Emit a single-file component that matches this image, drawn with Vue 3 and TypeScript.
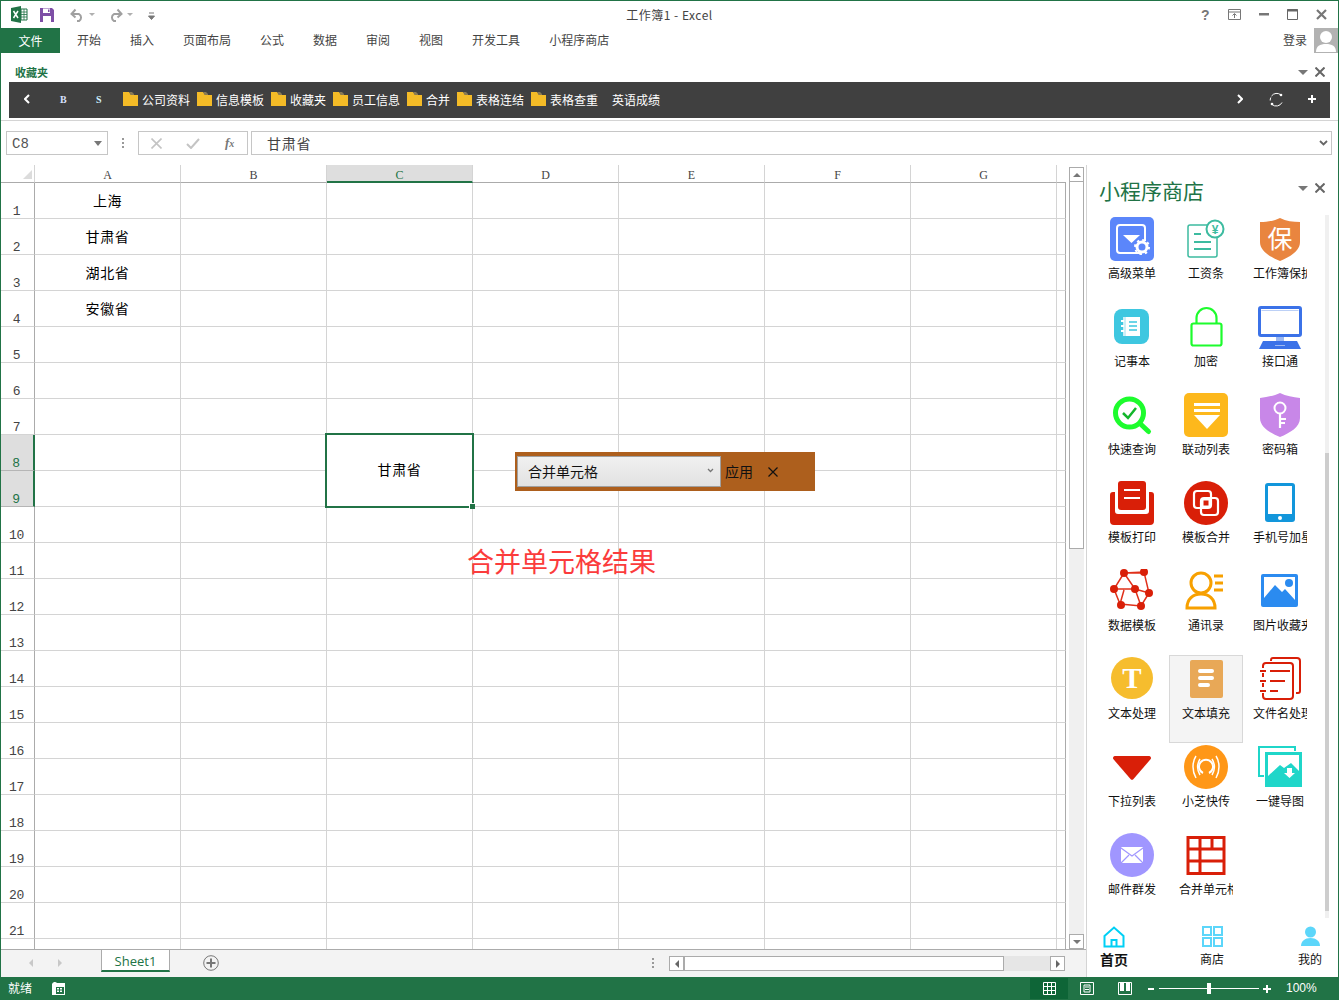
<script setup lang="ts">
import { computed } from 'vue'

const tabs = ['开始', '插入', '页面布局', '公式', '数据', '审阅', '视图', '开发工具', '小程序商店']
const folders = ['公司资料', '信息模板', '收藏夹', '员工信息', '合并', '表格连结', '表格查重']
const colNames = ['A', 'B', 'C', 'D', 'E', 'F', 'G']

const columnA: Record<number, string> = { 1: '上海', 2: '甘肃省', 3: '湖北省', 4: '安徽省' }

type Cell = { key: string; text: string; merged: boolean; edge: boolean }

const rows = computed(() => {
  const list: { num: number; on: boolean; cells: Cell[] }[] = []
  for (let r = 1; r <= 22; r++) {
    const cells: Cell[] = []
    for (let c = 0; c < 8; c++) {
      if (c === 2 && r === 9) continue // covered by the merged C8
      cells.push({
        key: `${r}-${c}`,
        text: c === 0 ? columnA[r] || '' : c === 2 && r === 8 ? '甘肃省' : '',
        merged: c === 2 && r === 8,
        edge: c === 7
      })
    }
    list.push({ num: r, on: r === 8 || r === 9, cells })
  }
  return list
})

const apps = [
  { id: 'menu', label: '高级菜单' },
  { id: 'salary', label: '工资条' },
  { id: 'protect', label: '工作簿保护' },
  { id: 'note', label: '记事本' },
  { id: 'lock', label: '加密' },
  { id: 'monitor', label: '接口通' },
  { id: 'search', label: '快速查询' },
  { id: 'linked', label: '联动列表' },
  { id: 'vault', label: '密码箱' },
  { id: 'print', label: '模板打印' },
  { id: 'mergeT', label: '模板合并' },
  { id: 'phone', label: '手机号加星' },
  { id: 'cube', label: '数据模板' },
  { id: 'contact', label: '通讯录' },
  { id: 'picture', label: '图片收藏夹' },
  { id: 'text', label: '文本处理' },
  { id: 'fill', label: '文本填充' },
  { id: 'files', label: '文件名处理' },
  { id: 'drop', label: '下拉列表' },
  { id: 'send', label: '小芝快传' },
  { id: 'images', label: '一键导图' },
  { id: 'mail', label: '邮件群发' },
  { id: 'mergeC', label: '合并单元格' }
]
</script>

<template>
  <div class="win">
    <!-- title bar -->
    <header class="titlebar">
      <div class="qat">
        <svg class="q-logo" width="17" height="17" viewBox="0 0 17 17">
          <path d="M0 2 10 0v17L0 15z" fill="#217346" />
          <path d="M10 3h6v11h-6z" fill="#fff" stroke="#217346" />
          <path d="M10 6h6M10 8.500h6M10 11h6M13 3v11" stroke="#217346" stroke-width=".8" />
          <path d="M2.500 5 7 12M7 5l-4.500 7" stroke="#fff" stroke-width="1.500" />
        </svg>
        <svg class="q-save" width="16" height="16" viewBox="0 0 16 16">
          <path d="M1 1h12l2 2v12H1z" fill="#7e4fa6" />
          <path d="M4 1.500h7v4.500H4z" fill="#fff" />
          <path d="M4 9h8v6H4z" fill="#fff" />
          <path d="M9 2.500h1.500v2.500H9z" fill="#7e4fa6" />
        </svg>
        <svg class="q-undo" width="15" height="14" viewBox="0 0 15 14" fill="none" stroke="#a0a0a0" stroke-width="2">
          <path d="M2 6h7a4 4 0 0 1 0 7H7" />
          <path d="M5.500 1.500 1.500 6l4 3.500" />
        </svg>
        <span class="q-caret"></span>
        <svg class="q-redo" width="15" height="14" viewBox="0 0 15 14" fill="none" stroke="#a0a0a0" stroke-width="2">
          <path d="M13 6H6a4 4 0 0 0 0 7h2" />
          <path d="M9.500 1.500 13.500 6l-4 3.500" />
        </svg>
        <span class="q-caret"></span>
        <svg class="q-more" width="7" height="8" viewBox="0 0 7 8"><path d="M1 1h5M0.500 4h6L3.500 7.500z" stroke="#777" stroke-width="1" fill="#777" /></svg>
      </div>
      <div class="title-text">工作簿1 - Excel</div>
      <div class="win-btns">
        <span class="help">?</span>
        <svg width="13" height="11" viewBox="0 0 13 11" fill="none" stroke="#777"><path d="M.5.500h12v10H.5zM.5 3h12" /><path d="M6.500 9V5M4.500 6.500l2-2 2 2" /></svg>
        <svg width="10" height="3" viewBox="0 0 10 3"><path d="M0 0h10v2.500H0z" fill="#777" /></svg>
        <svg width="11" height="11" viewBox="0 0 11 11" fill="none" stroke="#666"><path d="M.5.500h10v10H.5z" /><path d="M0 1.500h11" stroke-width="2" /></svg>
        <svg width="11" height="11" viewBox="0 0 11 11" stroke="#777" stroke-width="2.200"><path d="M1 1l9 9M10 1l-9 9" /></svg>
      </div>
    </header>

    <!-- ribbon tabs -->
    <nav class="ribbon">
      <div class="file-tab">文件</div>
      <div class="tabs">
        <span v-for="t in tabs" :key="t">{{ t }}</span>
      </div>
      <div class="login">登录</div>
      <div class="avatar">
        <svg width="24" height="24" viewBox="0 0 24 24">
          <circle cx="12" cy="9" r="6" fill="#fff" />
          <path d="M2 24c0-6 4-8 10-8s10 2 10 8z" fill="#fff" />
        </svg>
      </div>
    </nav>

    <!-- favorites pane -->
    <section class="fav">
      <div class="fav-head">
        <span class="fav-title">收藏夹</span>
        <span class="pane-caret"></span>
        <svg class="pane-x" width="10" height="10" viewBox="0 0 10 10" stroke="#666" stroke-width="2"><path d="M.5.500l9 9M9.500.500l-9 9" /></svg>
      </div>
      <div class="fav-bar">
        <svg class="chev" width="6" height="10" viewBox="0 0 6 10" fill="none" stroke="#fff" stroke-width="2"><path d="M5 1 1 5l4 4" /></svg>
        <span class="fav-b">B</span>
        <span class="fav-s">S</span>
        <div v-for="f in folders" :key="f" class="folder">
          <svg width="15" height="14" viewBox="0 0 15 14">
            <path d="M0 0h6l2 3h7v11H0z" fill="#f4bb27" />
            <path d="M6 0h3l2 2v1H8z" fill="#8a7a55" />
          </svg>
          <span>{{ f }}</span>
        </div>
        <span class="fav-last">英语成绩</span>
        <svg class="chev-r" width="6" height="10" viewBox="0 0 6 10" fill="none" stroke="#fff" stroke-width="2"><path d="M1 1l4 4-4 4" /></svg>
        <svg class="refresh" width="15" height="15" viewBox="0 0 15 15" fill="none" stroke="#fff">
          <path d="M2.500 4A6.500 6.500 0 0 1 12 3M13 10.500A6.500 6.500 0 0 1 3 12.500M1.200 8.500a6.500 6.500 0 0 1 .6-3" />
          <circle cx="12" cy="3" r="1.300" fill="#fff" stroke="none" />
          <circle cx="3" cy="12" r="1.300" fill="#fff" stroke="none" />
        </svg>
        <svg class="plus" width="8" height="8" viewBox="0 0 8 8" stroke="#fff" stroke-width="2"><path d="M4 0v8M0 4h8" /></svg>
      </div>
    </section>

    <!-- formula bar -->
    <section class="formula">
      <div class="namebox">
        <span class="namebox-text">C8</span>
        <i class="namebox-caret"></i>
      </div>
      <div class="fx-dots"><i></i><i></i><i></i></div>
      <div class="fx-btns">
        <svg width="11" height="11" viewBox="0 0 11 11" stroke="#c4c4c4" stroke-width="1.600"><path d="M.5.500l10 10M10.500.500l-10 10" /></svg>
        <svg width="14" height="11" viewBox="0 0 14 11" fill="none" stroke="#c4c4c4" stroke-width="2"><path d="M1 6l4 4 8-9" /></svg>
        <span class="fx">f<small>x</small></span>
      </div>
      <div class="fx-input">
        <span>甘肃省</span>
        <svg width="9" height="6" viewBox="0 0 9 6" fill="none" stroke="#666" stroke-width="1.800"><path d="M1 1l3.500 3.500L8 1" /></svg>
      </div>
    </section>

    <!-- sheet + side panel -->
    <main class="body">
      <div class="work">
        <div class="sheet-row">
          <div class="sheet">
            <div class="grid">
              <div class="corner"><i></i></div>
              <div v-for="(c, i) in colNames" :key="c" class="col-head" :class="{ on: i === 2 }">{{ c }}</div>
              <div class="col-head col-rest"></div>
              <template v-for="r in rows" :key="r.num">
                <div class="row-head" :class="{ on: r.on }">{{ r.num < 22 ? r.num : '' }}</div>
                <div
                  v-for="cell in r.cells"
                  :key="cell.key"
                  class="cell"
                  :class="{ merged: cell.merged, edge: cell.edge }"
                >
                  {{ cell.text }}
                  <template v-if="cell.merged">
                    <i class="sel-frame"></i>
                    <i class="sel-handle"></i>
                  </template>
                </div>
              </template>
            </div>
            <!-- floating tool from the add-in, lies over the sheet -->
            <div class="merge-tool">
              <div class="merge-select">
                <span>合并单元格</span>
                <svg width="7" height="5" viewBox="0 0 7 5" fill="none" stroke="#777" stroke-width="1.300"><path d="M1 1l2.500 2.500L6 1" /></svg>
              </div>
              <span class="merge-apply">应用</span>
              <svg class="merge-x" width="10" height="10" viewBox="0 0 10 10" stroke="#111" stroke-width="1.200"><path d="M.5.500l9 9M9.500.500l-9 9" /></svg>
            </div>
            <div class="merge-note">合并单元格结果</div>
          </div>
          <div class="vscroll">
            <div class="sb-btn"><i class="tri-up"></i></div>
            <div class="sb-thumb"></div>
            <div class="sb-rest"></div>
            <div class="sb-btn"><i class="tri-down"></i></div>
          </div>
        </div>
        <div class="sheet-bar">
          <div class="sheet-nav">
            <i class="tri-left"></i>
            <i class="tri-right"></i>
          </div>
          <div class="sheet-tab">Sheet1</div>
          <svg class="add-sheet" width="16" height="16" viewBox="0 0 16 16" fill="none" stroke="#777">
            <circle cx="8" cy="8" r="7.300" />
            <path d="M8 3.500v9M3.500 8h9" stroke-width="2" />
          </svg>
          <div class="bar-dots"><i></i><i></i><i></i></div>
          <div class="hscroll">
            <div class="hs-btn"><i class="tri-left dark"></i></div>
            <div class="hs-thumb"></div>
            <div class="hs-btn hs-end"><i class="tri-right dark"></i></div>
          </div>
        </div>
      </div>

      <aside class="panel">
        <div class="panel-head">
          <span class="panel-title">小程序商店</span>
          <span class="pane-caret"></span>
          <svg class="pane-x" width="10" height="10" viewBox="0 0 10 10" stroke="#666" stroke-width="2"><path d="M.5.500l9 9M9.500.500l-9 9" /></svg>
        </div>
        <div class="panel-scroll">
          <div class="apps">
            <div v-for="a in apps" :key="a.id" class="app" :class="{ hot: a.id === 'fill' }">
              <svg width="44" height="44" viewBox="0 0 44 44">
                <template v-if="a.id === 'menu'">
                  <rect width="44" height="44" rx="5" fill="#5b86fa" />
                  <path d="M30 36H10a3 3 0 0 1-3-3V11a3 3 0 0 1 3-3h22a3 3 0 0 1 3 3v13" fill="none" stroke="#fff" stroke-width="2" />
                  <path d="M13 18h17l-8.500 8z" fill="#fff" />
                  <circle cx="32" cy="30" r="5" fill="none" stroke="#fff" stroke-width="3" />
                  <circle cx="32" cy="30" r="7" fill="none" stroke="#fff" stroke-width="2" stroke-dasharray="2.500 3" />
                </template>
                <template v-else-if="a.id === 'salary'">
                  <path d="M28 8H6a2 2 0 0 0-2 2v28a2 2 0 0 0 2 2h25a2 2 0 0 0 2-2V20" fill="none" stroke="#3dbba0" stroke-width="1.500" />
                  <path d="M10 17h7M10 25h17M10 32h17" stroke="#3dbba0" stroke-width="2" />
                  <circle cx="31" cy="12" r="8.500" fill="#fff" stroke="#3dbba0" stroke-width="2" />
                  <text x="31" y="16.500" text-anchor="middle" font-size="12" font-weight="700" fill="#3dbba0" font-family="Liberation Sans, sans-serif">¥</text>
                </template>
                <template v-else-if="a.id === 'protect'">
                  <path d="M22 1c6 3 13 4 20 4v20c0 9-10 15-20 19C12 40 2 34 2 25V5c7 0 14-1 20-4z" fill="#e9853f" />
                  <text x="22" y="31" text-anchor="middle" font-size="25" fill="#fff" font-family="Noto Sans CJK SC, sans-serif">保</text>
                </template>
                <template v-else-if="a.id === 'note'">
                  <rect x="4" y="4" width="35" height="35" rx="8" fill="#3ec7e0" />
                  <path d="M13 12h17v19H13z" fill="#cdeff6" />
                  <path d="M16 12h14v19H16z" fill="#fff" />
                  <path d="M19 17h8M19 21h8M19 25h8" stroke="#3ec7e0" stroke-width="1.500" />
                  <path d="M11 16h3M11 21h3M11 26h3" stroke="#fff" stroke-width="2" />
                </template>
                <template v-else-if="a.id === 'lock'">
                  <rect x="7.500" y="18.500" width="30" height="22" rx="2" fill="none" stroke="#1dfc2d" stroke-width="2.200" />
                  <path d="M12.500 18v-5a10 10 0 0 1 20 0v5" fill="none" stroke="#1dfc2d" stroke-width="2.200" />
                </template>
                <template v-else-if="a.id === 'monitor'">
                  <rect x="1.500" y="2.500" width="41" height="28" rx="1.500" fill="#fff" stroke="#3b72e8" stroke-width="3" />
                  <path d="M3.500 5.500h37" stroke="#bcd0f6" stroke-width="1" />
                  <path d="M18 32h8v4h-8z" fill="#9db9f2" />
                  <path d="M5 36h34l4 8H1z" fill="#3b72e8" />
                  <path d="M17 40.500h10" stroke="#9db9f2" stroke-width="1" />
                </template>
                <template v-else-if="a.id === 'search'">
                  <circle cx="19.500" cy="20" r="14" fill="none" stroke="#1dfc2d" stroke-width="5" />
                  <path d="M30.500 31l8 7.500" stroke="#1dfc2d" stroke-width="5" stroke-linecap="round" />
                  <path d="M13 20l5 5 8-10" fill="none" stroke="#12b52a" stroke-width="2.500" />
                </template>
                <template v-else-if="a.id === 'linked'">
                  <rect width="44" height="44" rx="5" fill="#fdb81c" />
                  <path d="M10 10h26v3H10zM10 16h26v3H10z" fill="#fff" />
                  <path d="M10 22h26L23 36z" fill="#fff" />
                </template>
                <template v-else-if="a.id === 'vault'">
                  <path d="M22 0c6 3 13 4 20 5v20c0 9-10 15-20 19C12 40 2 34 2 25V5c7-1 14-2 20-5z" fill="#c887e8" />
                  <circle cx="22" cy="15" r="5.500" fill="none" stroke="#fff" stroke-width="2" />
                  <path d="M22 20v15M22 26h6M22 30h5" stroke="#fff" stroke-width="2.200" />
                </template>
                <template v-else-if="a.id === 'print'">
                  <rect x="8" y="0" width="28" height="29" rx="3" fill="#d91f08" />
                  <path d="M14 9h16M14 17h16" stroke="#fff" stroke-width="2" />
                  <path d="M0 14a3 3 0 0 1 3-3h2v19a3 3 0 0 0 3 3h28a3 3 0 0 0 3-3V11h2a3 3 0 0 1 3 3v26a4 4 0 0 1-4 4H4a4 4 0 0 1-4-4z" fill="#d91f08" />
                </template>
                <template v-else-if="a.id === 'mergeT'">
                  <circle cx="22" cy="22" r="22" fill="#d91f08" />
                  <rect x="10" y="10" width="17" height="17" rx="3" fill="none" stroke="#fff" stroke-width="2.200" />
                  <rect x="17" y="17" width="17" height="17" rx="3" fill="none" stroke="#fff" stroke-width="2.200" />
                  <rect x="18.500" y="18.500" width="7" height="7" fill="none" stroke="#fff" stroke-width="2" />
                </template>
                <template v-else-if="a.id === 'phone'">
                  <rect x="7" y="2" width="30" height="39" rx="3" fill="#1296db" />
                  <rect x="10" y="5" width="24" height="28" fill="#fff" />
                  <circle cx="22" cy="37" r="2" fill="#fff" />
                </template>
                <template v-else-if="a.id === 'cube'">
                  <g fill="none" stroke="#e0301a" stroke-width="1.500">
                    <path d="M14 4 4 20l6 15 21 2 8-13-5-21zM14 4h20M14 4l11 16L4 20M25 20l14 4M25 20l6 17M10 35l4-14" />
                  </g>
                  <g fill="#d91f08">
                    <circle cx="14" cy="4" r="4" /><circle cx="34" cy="3" r="4" /><circle cx="4" cy="20" r="4" />
                    <circle cx="25" cy="20" r="4" /><circle cx="39" cy="24" r="4" /><circle cx="11" cy="36" r="4" />
                    <circle cx="31" cy="37" r="4" />
                  </g>
                </template>
                <template v-else-if="a.id === 'contact'">
                  <g fill="none" stroke="#f7a000" stroke-width="3">
                    <circle cx="17" cy="14" r="10" />
                    <path d="M3 39c0-9 6-14 14-14s14 5 14 14z" />
                  </g>
                  <path d="M30 7h9M31 14h8M30 21h9" stroke="#f7a000" stroke-width="3" />
                </template>
                <template v-else-if="a.id === 'picture'">
                  <rect x="3" y="5" width="37" height="33" rx="2" fill="#2b8bf0" />
                  <path d="M6 8h31v23L27 20l-3 3-7-7L6 29z" fill="#fff" />
                  <circle cx="31" cy="14" r="4" fill="#2b8bf0" />
                </template>
                <template v-else-if="a.id === 'text'">
                  <circle cx="22" cy="21" r="21" fill="#f6bd2e" />
                  <text x="22" y="31" text-anchor="middle" font-size="29" font-weight="700" fill="#fff" font-family="Liberation Serif, serif">T</text>
                </template>
                <template v-else-if="a.id === 'fill'">
                  <rect x="6" y="3" width="33" height="38" rx="2" fill="#e8a857" />
                  <path d="M16 14h12M16 21h12M16 28h8" stroke="#fff" stroke-width="4" stroke-linecap="round" />
                </template>
                <template v-else-if="a.id === 'files'">
                  <g fill="none" stroke="#d91f08" stroke-width="2">
                    <path d="M13 4V3a2 2 0 0 1 2-2h24a3 3 0 0 1 3 3v30a2 2 0 0 1-2 2h-2" />
                    <path d="M5 11V9a3 3 0 0 1 3-3h24a3 3 0 0 1 3 3v30a3 3 0 0 1-3 3H8a3 3 0 0 1-3-3v-3M5 16v4M5 26v4" />
                  </g>
                  <path d="M2 14h6M12 14h20M2 24h6M12 24h15M2 34h6M12 34h8" stroke="#d91f08" stroke-width="2" />
                </template>
                <template v-else-if="a.id === 'drop'">
                  <path d="M5 11h34a2 2 0 0 1 1.500 3.300L23.500 34a2 2 0 0 1-3 0L3.500 14.300A2 2 0 0 1 5 11z" fill="#d91f08" />
                </template>
                <template v-else-if="a.id === 'send'">
                  <circle cx="22" cy="22" r="22" fill="#ff9717" />
                  <g fill="none" stroke="#fff" stroke-width="1.500">
                    <path d="M12 11c-4 6-4 15 0 22M32 11c4 6 4 15 0 22" />
                    <path d="M16 14c-3 5-3 11 0 16M28 14c3 5 3 11 0 16" />
                    <path d="M19 28a7 7 0 1 1 6 0" stroke-width="2" />
                  </g>
                </template>
                <template v-else-if="a.id === 'images'">
                  <path d="M6 31H1V2h36v4" fill="none" stroke="#1fd6c9" stroke-width="2" />
                  <path d="M7 7h37v35H7z" fill="#1fd6c9" />
                  <path d="M10 10h31v16l-8-8-7 5-4-3-12 11z" fill="#fff" />
                  <path d="M29 23h5v5h3l-5.500 5-5.500-5h3z" fill="#fff" />
                </template>
                <template v-else-if="a.id === 'mail'">
                  <circle cx="22" cy="22" r="22" fill="#a096ff" />
                  <rect x="11" y="14" width="22" height="16" rx="1" fill="#fff" />
                  <path d="M11 15l11 8 11-8M11 30l8-8M33 30l-8-8" fill="none" stroke="#a096ff" stroke-width="1.200" />
                </template>
                <template v-else-if="a.id === 'mergeC'">
                  <rect x="4" y="4.500" width="36" height="36" fill="#fff" stroke="#d91f08" stroke-width="3" />
                  <path d="M4 16h36M4 28h36M16 4v36M28 4v12" fill="none" stroke="#d91f08" stroke-width="3" />
                </template>
              </svg>
              <div class="app-label">{{ a.label }}</div>
            </div>
          </div>
          <div class="panel-sb"><div class="panel-thumb"></div></div>
        </div>
        <div class="panel-nav">
          <div class="nav-item first">
            <svg width="22" height="22" viewBox="0 0 22 22" fill="none" stroke="#00d0f5" stroke-width="2">
              <path d="M1.500 10 11 1.500 20.500 10v10.500h-19z" />
              <path d="M8.500 20v-6h5v6" />
            </svg>
            <span>首页</span>
          </div>
          <div class="nav-item">
            <svg width="21" height="21" viewBox="0 0 21 21" fill="none" stroke="#5cd6fa" stroke-width="2">
              <path d="M1 1h8v8H1zM12 1h8v8h-8zM1 12h8v8H1zM12 12h8v8h-8z" />
            </svg>
            <span>商店</span>
          </div>
          <div class="nav-item">
            <svg width="21" height="21" viewBox="0 0 21 21" fill="#5cd6fa">
              <circle cx="10.500" cy="6" r="5.500" />
              <path d="M1 20c0-5 4-8 9.500-8S20 15 20 20z" />
            </svg>
            <span>我的</span>
          </div>
        </div>
      </aside>
    </main>

    <!-- status bar -->
    <footer class="status">
      <span class="ready">就绪</span>
      <svg class="macro" width="13" height="13" viewBox="0 0 13 13" fill="#fff">
        <path d="M0 2a3 3 0 0 1 5-1h8v12H0z" />
        <path d="M4 5h8v7H4z" fill="#217346" />
        <path d="M5 6h2v1.500H5zM8 6h2v1.500H8zM5 8.500h2V10H5zM8 8.500h2V10H8z" />
      </svg>
      <div class="view-btns">
        <div class="view on">
          <svg width="13" height="13" viewBox="0 0 13 13" fill="none" stroke="#fff"><path d="M.5.500h12v12H.5zM.5 4.500h12M.5 8.500h12M4.500.500v12M8.500.500v12" /></svg>
        </div>
        <div class="view">
          <svg width="14" height="13" viewBox="0 0 14 13" fill="none" stroke="#fff"><path d="M.5.500h13v12H.5zM4 3h6v7H4zM5 5h4M5 7.500h4" /></svg>
        </div>
        <div class="view">
          <svg width="14" height="13" viewBox="0 0 14 13" fill="none" stroke="#fff"><path d="M.5.500h13v12H.5z" /><path d="M2 1h4v8H2zM8 1h4v8H8z" fill="#fff" stroke="none" /></svg>
        </div>
      </div>
      <div class="zoom">
        <i class="z-minus"></i>
        <div class="z-track"><i class="z-thumb"></i></div>
        <svg width="8" height="8" viewBox="0 0 8 8" stroke="#fff" stroke-width="2"><path d="M4 0v8M0 4h8" /></svg>
      </div>
      <span class="pct">100%</span>
    </footer>
  </div>
</template>

<style scoped>
.win {
  box-sizing: border-box;
  width: 1339px;
  height: 1000px;
  background: #fff;
  border: 1px solid #217346;
  border-bottom: 0;
  display: flex;
  flex-direction: column;
  overflow: hidden;
  font-family: "Noto Sans CJK SC", "Liberation Sans", sans-serif;
  font-size: 12px;
  color: #444;
}

.titlebar {
  height: 27px;
  flex: none;
  position: relative;
  display: flex;
  align-items: center;
}

.qat {
  display: flex;
  align-items: center;
  padding-left: 10px;
}

.q-save { margin-left: 11px; }
.q-undo { margin-left: 15px; }
.q-redo { margin-left: 13px; }
.q-more { margin-left: 15px; margin-top: 2px; }

.q-caret {
  margin-left: 4px;
  border-top: 3px solid #b0b0b0;
  border-left: 3px solid transparent;
  border-right: 3px solid transparent;
}

.title-text {
  position: absolute;
  left: 0;
  right: 0;
  top: 5px;
  text-align: center;
  line-height: 17px;
  letter-spacing: .5px;
  color: #444;
}

.win-btns {
  margin-left: auto;
  display: flex;
  align-items: center;
  gap: 0;
  padding-right: 11px;
}

.win-btns svg { margin-left: 18px; }

.help {
  font: 700 14px "Liberation Sans", sans-serif;
  color: #777;
  width: 9px;
}

.ribbon {
  height: 26px;
  flex: none;
  display: flex;
  align-items: stretch;
}

.file-tab {
  width: 59px;
  height: 25px;
  background: #217346;
  color: #fff;
  text-align: center;
  line-height: 25px;
}

.tabs {
  display: flex;
  gap: 29px;
  padding-left: 17px;
  line-height: 24px;
  color: #444;
}

.login {
  margin-left: auto;
  line-height: 23px;
  margin-right: 7px;
}

.avatar {
  width: 24px;
  height: 25px;
  background: #b2b2b2;
  overflow: hidden;
}

.avatar svg { display: block; }

.fav {
  height: 67px;
  flex: none;
  box-sizing: border-box;
  border-bottom: 1px solid #d4d4d4;
  padding: 0 8px 0 8px;
}

.fav-head {
  height: 28px;
  display: flex;
  align-items: center;
  padding-top: 8px;
  box-sizing: border-box;
}

.fav-title {
  margin-left: 6px;
  color: #217346;
  font-size: 11px;
  font-weight: 700;
  margin-right: auto;
}

.pane-caret {
  width: 0;
  height: 0;
  border-top: 5px solid #777;
  border-left: 5px solid transparent;
  border-right: 5px solid transparent;
  margin-right: 7px;
}

.pane-x { margin-right: 5px; }

.fav-bar {
  width: 1321px;
  height: 36px;
  box-sizing: border-box;
  padding-bottom: 2px;
  background: #404040;
  display: flex;
  align-items: center;
  color: #fff;
}

.chev { margin-left: 15px; }

.fav-b,
.fav-s {
  font: 700 10px "Liberation Serif", serif;
  width: 7px;
}

.fav-b { margin-left: 30px; color: #d8e0ff; }
.fav-s { margin-left: 29px; margin-right: 20px; color: #d0f0ff; }

.folder {
  display: flex;
  align-items: center;
  gap: 4px;
  margin-right: 7px;
}

.fav-last { margin-left: 7px; }
.chev-r { margin-left: auto; margin-right: 26px; }
.refresh { margin-right: 24px; }
.plus { margin-right: 14px; }

.formula {
  height: 44px;
  flex: none;
  box-sizing: border-box;
  padding: 10px 6px 0 5px;
  display: flex;
  align-items: flex-start;
}

.namebox,
.fx-btns,
.fx-input {
  box-sizing: border-box;
  height: 24px;
  border: 1px solid #c6c6c6;
  display: flex;
  align-items: center;
}

.namebox {
  width: 102px;
  padding: 0 5px;
  font: 14px "Liberation Mono", monospace;
  color: #555;
}

.namebox-text { padding-top: 2px; }

.namebox-caret {
  margin-left: auto;
  margin-right: 0;
  border-top: 5px solid #777;
  border-left: 4px solid transparent;
  border-right: 4px solid transparent;
}

.fx-dots {
  width: 30px;
  height: 24px;
  display: flex;
  flex-direction: column;
  align-items: center;
  justify-content: center;
  gap: 2px;
}

.fx-dots i,
.bar-dots i {
  width: 2px;
  height: 2px;
  background: #999;
}

.fx-btns {
  width: 110px;
  padding-left: 12px;
  gap: 24px;
}

.fx {
  font: italic 700 13px "Liberation Serif", serif;
  color: #777;
  margin-left: 1px;
}

.fx small { font-size: 10px; }

.fx-input {
  width: 1081px;
  margin-left: 3px;
  padding: 0 3px 1px 15px;
  font-size: 14px;
  letter-spacing: .7px;
  color: #444;
  justify-content: space-between;
}

.body {
  flex: 1;
  min-height: 0;
  display: flex;
}

.work {
  width: 1085px;
  flex: none;
  display: flex;
  flex-direction: column;
  border-right: 1px solid #d4d4d4;
}

.sheet-row {
  height: 784px;
  flex: none;
  display: flex;
}

.sheet {
  width: 1065px;
  flex: none;
  position: relative;
  overflow: hidden;
}

.grid {
  display: grid;
  grid-template-columns: 34px repeat(7, 146px) 9px;
  grid-auto-rows: 36px;
  grid-template-rows: 18px;
  width: 1065px;
  font-size: 14px;
  color: #000;
}

.corner {
  border-bottom: 1px solid #ababab;
  border-right: 1px solid #d4d4d4;
  box-sizing: border-box;
  position: relative;
}

.corner i {
  position: absolute;
  right: 2px;
  bottom: 3px;
  border-bottom: 9px solid #dcdcdc;
  border-left: 9px solid transparent;
}

.col-head {
  box-sizing: border-box;
  border-bottom: 1px solid #ababab;
  border-right: 1px solid #d4d4d4;
  text-align: center;
  font: 12px/20px "Liberation Serif", serif;
  color: #444;
}

.col-head.on {
  background: #dedede;
  color: #217346;
  border-bottom: 2px solid #217346;
}

.col-rest { border-right: 0; }

.row-head {
  box-sizing: border-box;
  border-bottom: 1px solid #d4d4d4;
  border-right: 1px solid #ababab;
  font: 13px/12px "Liberation Mono", monospace;
  letter-spacing: -.4px;
  color: #444;
  text-align: center;
  display: flex;
  align-items: flex-end;
  justify-content: center;
  padding: 0 2px 0 0;
}

.row-head.on {
  background: #dedede;
  color: #217346;
  border-bottom-color: #b5b5b5;
  border-right: 2px solid #217346;
}

.cell {
  box-sizing: border-box;
  border-bottom: 1px solid #d4d4d4;
  border-right: 1px solid #d4d4d4;
  display: flex;
  align-items: center;
  justify-content: center;
  padding-bottom: 2px;
  letter-spacing: .6px;
}

.cell.edge {
  border-bottom-color: #d4d4d4;
  border-right-color: #ababab;
}

.merged {
  grid-row: span 2;
  position: relative;
  padding-bottom: 4px;
}

.sel-frame {
  position: absolute;
  left: -2px;
  top: -2px;
  right: -2px;
  bottom: -2px;
  border: 2px solid #217346;
}

.sel-handle {
  position: absolute;
  right: -3px;
  bottom: -3px;
  width: 5px;
  height: 5px;
  background: #217346;
  border-left: 1px solid #fff;
  border-top: 1px solid #fff;
  z-index: 1;
}

.merge-tool {
  position: absolute;
  left: 514px;
  top: 287px;
  width: 300px;
  height: 39px;
  box-sizing: border-box;
  background: #ad5f1d;
  padding: 4px 0 4px 2px;
  display: flex;
  align-items: center;
  color: #111;
  font-size: 14px;
}

.merge-select {
  box-sizing: border-box;
  width: 204px;
  height: 31px;
  border: 1px solid #a0a0a0;
  background: linear-gradient(#f0f0f0, #e2e2e2);
  display: flex;
  align-items: center;
  justify-content: space-between;
  padding: 0 6px 2px 10px;
  color: #111;
}

.merge-apply { margin-left: 4px; padding-bottom: 2px; }
.merge-x { margin-left: 15px; }

.merge-note {
  position: absolute;
  left: 466px;
  top: 376px;
  font-size: 27px;
  line-height: 40px;
  color: #fb3c3c;
  white-space: nowrap;
}

.vscroll {
  width: 20px;
  flex: none;
  box-sizing: border-box;
  padding: 2px 2px 0 3px;
  display: flex;
  flex-direction: column;
  background: #fff;
}

.sb-btn {
  height: 15px;
  flex: none;
  box-sizing: border-box;
  border: 1px solid #ababab;
  background: #fff;
  display: flex;
  align-items: center;
  justify-content: center;
}

.sb-thumb {
  height: 367px;
  flex: none;
  box-sizing: border-box;
  border: 1px solid #ababab;
  border-top: 0;
  background: #fff;
}

.sb-rest { flex: 1; background: #f0f0f0; }

.tri-up {
  border-bottom: 4px solid #777;
  border-left: 4px solid transparent;
  border-right: 4px solid transparent;
}

.tri-down {
  border-top: 4px solid #777;
  border-left: 4px solid transparent;
  border-right: 4px solid transparent;
}

.tri-left,
.tri-right {
  display: block;
  border-top: 4px solid transparent;
  border-bottom: 4px solid transparent;
}

.tri-left { border-right: 4px solid #c8c8c8; }
.tri-right { border-left: 4px solid #c8c8c8; }
.tri-left.dark { border-right-color: #666; }
.tri-right.dark { border-left-color: #666; }

.sheet-bar {
  flex: 1;
  box-sizing: border-box;
  background: #f3f3f3;
  border-top: 1px solid #ababab;
  display: flex;
  align-items: flex-start;
  position: relative;
}

.sheet-nav {
  width: 100px;
  flex: none;
  box-sizing: border-box;
  padding: 9px 0 0 28px;
  display: flex;
  gap: 25px;
}

.sheet-tab {
  width: 69px;
  height: 23px;
  box-sizing: border-box;
  margin-top: -1px;
  background: #fff;
  border: 1px solid #ababab;
  border-top-color: #ababab;
  border-bottom: 2px solid #217346;
  color: #217346;
  font: 13px/23px "Open Sans", "Liberation Sans", sans-serif;
  text-align: center;
}

.add-sheet { margin: 5px 0 0 33px; }

.bar-dots {
  margin: 8px 0 0 433px;
  display: flex;
  flex-direction: column;
  gap: 2px;
}

.hscroll {
  margin: 6px 0 0 15px;
  width: 396px;
  height: 15px;
  box-sizing: border-box;
  background: #e6e6e6;
  display: flex;
}

.hs-btn {
  width: 15px;
  height: 15px;
  box-sizing: border-box;
  border: 1px solid #ababab;
  background: #fff;
  display: flex;
  align-items: center;
  justify-content: center;
}

.hs-thumb {
  width: 320px;
  box-sizing: border-box;
  border: 1px solid #ababab;
  background: #fff;
}

.hs-end { margin-left: auto; }

.panel {
  flex: 1;
  min-width: 0;
  display: flex;
  flex-direction: column;
  background: #fff;
}

.panel-head {
  height: 42px;
  flex: none;
  display: flex;
  align-items: flex-end;
  padding: 0 8px 2px 12px;
  box-sizing: border-box;
}

.panel-title {
  font-size: 21px;
  line-height: 30px;
  color: #217346;
  margin-right: auto;
}

.panel-head .pane-caret { margin-bottom: 14px; }
.panel-head .pane-x { margin-bottom: 12px; }

.panel-scroll {
  height: 711px;
  flex: none;
  display: flex;
  padding: 8px 0 0 8px;
  box-sizing: border-box;
  overflow: hidden;
}

.apps {
  width: 230px;
  flex: none;
  display: grid;
  grid-template-columns: repeat(3, 74px);
  grid-auto-rows: 88px;
}

.app {
  box-sizing: border-box;
  display: flex;
  flex-direction: column;
  align-items: center;
  padding-top: 2px;
}

.app svg { display: block; }

.app.hot {
  background: #f4f4f4;
  outline: 1px solid #d8d8d8;
  outline-offset: -1px;
}

.app-label {
  width: 54px;
  margin-top: 4px;
  line-height: 16px;
  height: 16px;
  overflow: hidden;
  white-space: nowrap;
  text-align: center;
  color: #111;
}

.panel-sb {
  width: 4px;
  height: 712px;
  flex: none;
  background: #f0f0f0;
  position: relative;
}

.panel-thumb {
  position: absolute;
  left: 0;
  right: 0;
  top: 238px;
  height: 458px;
  background: #cdcdcd;
}

.panel-nav {
  flex: 1;
  display: flex;
  justify-content: space-between;
  padding: 8px 13px 0 12px;
}

.nav-item {
  width: 30px;
  display: flex;
  flex-direction: column;
  align-items: center;
  color: #111;
  line-height: 16px;
}

.nav-item span { margin-top: 4px; }

.nav-item.first span {
  font-size: 14px;
  font-weight: 700;
  margin-top: 3px;
}

.status {
  height: 23px;
  flex: none;
  background: #217346;
  color: #fff;
  display: flex;
  align-items: center;
  padding-left: 8px;
  margin: 0 -1px;
}

.ready { font-size: 12px; margin-top: -3px; }
.macro { margin-left: 20px; }

.view-btns {
  margin-left: 965px;
  display: flex;
  height: 21px;
}

.view {
  width: 38px;
  display: flex;
  align-items: center;
  justify-content: center;
}

.view.on { background: #0e6537; }

.zoom {
  display: flex;
  align-items: center;
  margin-left: 4px;
}

.z-minus {
  width: 6px;
  height: 2px;
  background: #fff;
}

.z-track {
  width: 100px;
  height: 1px;
  background: #fff;
  margin: 0 4px 0 5px;
  position: relative;
}

.z-thumb {
  position: absolute;
  left: 48px;
  top: -5px;
  width: 4px;
  height: 11px;
  background: #fff;
}

.pct {
  margin-left: 15px;
  margin-top: -2px;
  font: 12px "Liberation Sans", sans-serif;
}
</style>

<style>
html, body {
  margin: 0;
  background: #fff;
}
</style>
